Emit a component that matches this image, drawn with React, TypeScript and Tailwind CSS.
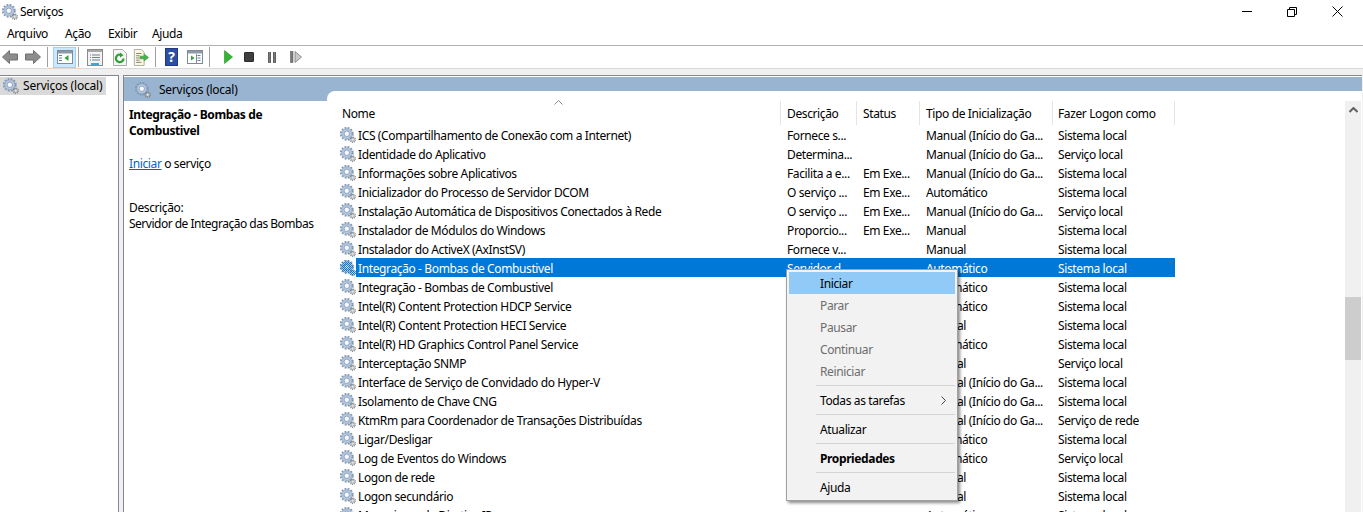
import React from "react"

const font = { fontFamily: '"Noto Sans", "Open Sans", sans-serif' }

const rows = [
  ["ICS (Compartilhamento de Conexão com a Internet)", "Fornece s...", "", "Manual (Início do Ga...", "Sistema local"],
  ["Identidade do Aplicativo", "Determina...", "", "Manual (Início do Ga...", "Serviço local"],
  ["Informações sobre Aplicativos", "Facilita a e...", "Em Exe...", "Manual (Início do Ga...", "Sistema local"],
  ["Inicializador do Processo de Servidor DCOM", "O serviço ...", "Em Exe...", "Automático", "Sistema local"],
  ["Instalação Automática de Dispositivos Conectados à Rede", "O serviço ...", "Em Exe...", "Manual (Início do Ga...", "Serviço local"],
  ["Instalador de Módulos do Windows", "Proporcio...", "Em Exe...", "Manual", "Sistema local"],
  ["Instalador do ActiveX (AxInstSV)", "Fornece v...", "", "Manual", "Sistema local"],
  ["Integração - Bombas de Combustivel", "Servidor d...", "", "Automático", "Sistema local"],
  ["Integração - Bombas de Combustivel", "", "", "Automático", "Sistema local"],
  ["Intel(R) Content Protection HDCP Service", "", "", "Automático", "Sistema local"],
  ["Intel(R) Content Protection HECI Service", "", "", "Manual", "Sistema local"],
  ["Intel(R) HD Graphics Control Panel Service", "", "", "Automático", "Sistema local"],
  ["Interceptação SNMP", "", "", "Manual", "Serviço local"],
  ["Interface de Serviço de Convidado do Hyper-V", "", "", "Manual (Início do Ga...", "Sistema local"],
  ["Isolamento de Chave CNG", "", "", "Manual (Início do Ga...", "Sistema local"],
  ["KtmRm para Coordenador de Transações Distribuídas", "", "", "Manual (Início do Ga...", "Serviço de rede"],
  ["Ligar/Desligar", "", "", "Automático", "Sistema local"],
  ["Log de Eventos do Windows", "", "", "Automático", "Serviço local"],
  ["Logon de rede", "", "", "Manual", "Sistema local"],
  ["Logon secundário", "", "", "Manual", "Sistema local"],
  ["Mecanismo de Diretiva IPsec", "", "", "Automático", "Sistema local"],
]

function Gear({ selected = false }: { selected?: boolean }) {
  return (
    <svg width="16" height="16" viewBox="0 0 16 16" className="shrink-0">
      <defs>
        <pattern id="dither" width="2" height="2" patternUnits="userSpaceOnUse">
          <rect width="1" height="1" fill="#0078d7" />
          <rect x="1" y="1" width="1" height="1" fill="#0078d7" />
        </pattern>
      </defs>
      <circle cx="6.8" cy="6.8" r="6" fill="none" stroke="#8298b4" strokeWidth="1.8" strokeDasharray="1.9 1.25" />
      <circle cx="6.8" cy="6.8" r="5" fill="#b4c8e0" stroke="#7f95b2" strokeWidth="0.6" />
      <circle cx="6.8" cy="6.8" r="2.7" fill="#f6f9fd" stroke="#7f95b2" strokeWidth="0.8" />
      <circle cx="12.7" cy="12.7" r="2.6" fill="none" stroke="#74777b" strokeWidth="1.2" strokeDasharray="1 0.8" />
      <circle cx="12.7" cy="12.7" r="1.7" fill="#dfe1e4" stroke="#85888c" strokeWidth="0.6" />
      {selected && (
        <>
          <circle cx="6.8" cy="6.8" r="6" fill="none" stroke="url(#dither)" strokeWidth="1.8" strokeDasharray="1.9 1.25" />
          <circle cx="6.8" cy="6.8" r="5" fill="url(#dither)" />
          <circle cx="12.7" cy="12.7" r="2.6" fill="url(#dither)" stroke="url(#dither)" strokeWidth="1.2" strokeDasharray="1 0.8" />
        </>
      )}
    </svg>
  )
}

function Sep() {
  return <div className="w-px h-[20px] bg-[#a0a0a0]" />
}

function Arrow({ flip = false }: { flip?: boolean }) {
  return (
    <svg width="16" height="14" viewBox="0 0 16 14" className={flip ? "-scale-x-100" : ""}>
      <path d="M0.5 7 L7.5 0.5 V4 H15.5 V10 H7.5 V13.5 Z" fill="#8d8d8d" stroke="#6f6f6f" strokeWidth="1" />
    </svg>
  )
}

function Toolbar() {
  return (
    <div className="h-[23px] flex items-center bg-white border-b border-[#d9d9d9] pl-[2px]">
      <Arrow />
      <div className="w-[7px]" />
      <Arrow flip />
      <div className="w-[6px]" />
      <Sep />
      <div className="w-[5px]" />
      <div className="w-[23px] h-[21px] bg-[#cce8ff] border border-[#99d1ff] flex items-center justify-center">
        <svg width="16" height="14" viewBox="0 0 16 14">
          <rect x="0.5" y="0.5" width="15" height="13" fill="#fff" stroke="#7f8b99" />
          <rect x="1" y="1" width="14" height="2.5" fill="#8d99a8" />
          <path d="M2 5.5h3M2 8h3M2 10.5h3" stroke="#5f7fa8" strokeWidth="1" />
          <path d="M11.5 5 L7.5 8 L11.5 11 Z" fill="#2fa33a" />
        </svg>
      </div>
      <div className="w-[2px]" />
      <Sep />
      <div className="w-[8px]" />
      <svg width="16" height="17" viewBox="0 0 16 17">
        <rect x="0.5" y="0.5" width="15" height="16" fill="#f3f3f3" stroke="#8a8a8a" />
        <rect x="1" y="1" width="14" height="2" fill="#a8a8a8" />
        <path d="M3 6h10M3 8.5h10M3 11h10" stroke="#6f7f92" strokeWidth="1" strokeDasharray="1 1 8 0" />
        <rect x="4" y="14" width="8" height="2" fill="#34a8e8" />
      </svg>
      <div className="w-[9px]" />
      <svg width="16" height="17" viewBox="0 0 16 17">
        <path d="M1.5 0.5 H10.5 L14.5 4.5 V16.5 H1.5 Z" fill="#f6f6f6" stroke="#a8a8a8" />
        <path d="M11.5 9.5 A3.8 3.8 0 1 1 9.5 6" fill="none" stroke="#2f9e35" strokeWidth="2.2" />
        <path d="M8 3.5 L11.5 6.2 L8 8.5 Z" fill="#2f9e35" />
      </svg>
      <div className="w-[5px]" />
      <svg width="16" height="17" viewBox="0 0 18 19">
        <path d="M1.5 0.5 H9.5 L12.5 3.5 V18.5 H1.5 Z" fill="#fbf7dc" stroke="#a8a8a0" />
        <path d="M3.5 5h6M3.5 7.5h4M3.5 10h4M3.5 12.5h4M3.5 15h6" stroke="#777" strokeWidth="1" />
        <path d="M8 8 H12.5 V5.5 L17.5 9.5 L12.5 13.5 V11 H8 Z" fill="#45b34a" stroke="#2f8f35" strokeWidth="0.6" />
      </svg>
      <div className="w-[6px]" />
      <Sep />
      <div className="w-[9px]" />
      <div className="w-[13px] h-[18px] bg-[#2c4ea3] border border-[#1f3a80] text-white text-[14px] font-bold flex items-center justify-center leading-none">?</div>
      <div className="w-[9px]" />
      <svg width="16" height="14" viewBox="0 0 16 14">
        <rect x="0.5" y="0.5" width="15" height="13" fill="#fff" stroke="#7f8b99" />
        <rect x="1" y="1" width="14" height="2.5" fill="#8d99a8" />
        <path d="M4 5.5 L7.5 8 L4 10.5 Z" fill="#2fa33a" />
        <path d="M10.5 5.5h3M10.5 8h3M10.5 10.5h3" stroke="#5f7fa8" strokeWidth="1" />
        <path d="M9.5 4v9" stroke="#7f8b99" />
      </svg>
      <div className="w-[6px]" />
      <Sep />
      <div className="w-[14px]" />
      <svg width="9" height="14" viewBox="0 0 9 14"><path d="M0.5 0.5 L8.5 7 L0.5 13.5 Z" fill="#35b535" stroke="#1f8f1f" strokeWidth="0.6" /></svg>
      <div className="w-[11px]" />
      <div className="w-[10px] h-[10px] bg-[#3f3f3f] border border-[#2b2b2b] rounded-[1px]" />
      <div className="w-[14px]" />
      <div className="flex gap-[2px]">
        <div className="w-[3px] h-[11px] bg-[#7a7a7a] border-x border-[#5f5f5f]" />
        <div className="w-[3px] h-[11px] bg-[#7a7a7a] border-x border-[#5f5f5f]" />
      </div>
      <div className="w-[14px]" />
      <svg width="12" height="12" viewBox="0 0 12 12">
        <rect x="0.5" y="0.5" width="2.5" height="11" fill="#7a7a7a" stroke="#5f5f5f" strokeWidth="0.6" />
        <path d="M5 0.5 L11.5 6 L5 11.5 Z" fill="#c9c9c9" stroke="#777" strokeWidth="0.8" />
      </svg>
    </div>
  )
}

function ContextMenu() {
  const disabled = ["Parar", "Pausar", "Continuar", "Reiniciar"]
  const line = <div className="h-[7px] flex items-center pl-[27px]"><div className="h-px w-full bg-[#d4d4d4]" /></div>
  const item = "h-[22px] flex items-center pl-[31px] pt-px"
  return (
    <div className="absolute left-[786px] top-[269px] w-[172px] bg-[#f2f2f2] border border-[#a0a0a0] p-[2px] shadow-[2px_2px_3px_rgba(0,0,0,0.45)]">
      <div className={`${item} bg-[#91c9f7] text-black`}>Iniciar</div>
      {disabled.map((d) => (
        <div key={d} className={`${item} text-[#6d6d6d]`}>{d}</div>
      ))}
      {line}
      <div className={`${item} justify-between pr-[9px]`}>
        <span>Todas as tarefas</span>
        <svg width="5" height="9" viewBox="0 0 5 9"><path d="M0.5 0.5 L4.5 4.5 L0.5 8.5" fill="none" stroke="#444" /></svg>
      </div>
      {line}
      <div className={item}>Atualizar</div>
      {line}
      <div className={`${item} font-bold`}>Propriedades</div>
      {line}
      <div className={item}>Ajuda</div>
    </div>
  )
}

function Row({ row, selected }: { row: string[]; selected: boolean }) {
  const text = selected ? "text-white" : "text-black"
  return (
    <div className="flex h-[19px] items-center whitespace-nowrap shrink-0">
      <div className="w-[13px]" />
      <Gear selected={selected} />
      <div className={`flex items-center h-full pl-[2px] pt-[2px] w-[819px] ${selected ? "bg-[#0078d7]" : ""} ${text}`}>
        <div className="w-[429px] overflow-hidden">{row[0]}</div>
        <div className="w-[76px] overflow-hidden">{row[1]}</div>
        <div className="w-[63px] overflow-hidden">{row[2]}</div>
        <div className="w-[132px] overflow-hidden">{row[3]}</div>
        <div>{row[4]}</div>
      </div>
    </div>
  )
}

export default function App() {
  const headers: [string, string][] = [
    ["Descrição", "w-[76px] pl-[6px]"],
    ["Status", "w-[63px] pl-[6px]"],
    ["Tipo de Inicialização", "w-[133px] pl-[6px]"],
    ["Fazer Logon como", "w-[122px] pl-[5px]"],
  ]
  return (
    <div className="relative w-[1363px] h-[512px] overflow-hidden bg-white text-[12px] leading-[16px] tracking-[-0.38px] text-black flex flex-col" style={font}>
      {/* title bar */}
      <div className="h-[23px] flex items-center pl-[2px] shrink-0">
        <Gear />
        <span className="ml-[2px]">Serviços</span>
        <div className="ml-auto flex items-center">
          <div className="w-[10px] h-px bg-black mr-[35px]" />
          <svg width="10" height="10" viewBox="0 0 10 10" className="mr-[35px]">
            <path d="M0.5 2.5h7v7h-7zM2.5 2.5v-2h7v7h-2" fill="none" stroke="#000" />
          </svg>
          <svg width="11" height="11" viewBox="0 0 11 11" className="mr-[20px]">
            <path d="M0.5 0.5 L10.5 10.5 M10.5 0.5 L0.5 10.5" stroke="#000" />
          </svg>
        </div>
      </div>
      {/* menu */}
      <div className="h-[23px] flex items-center border-b border-[#b0b0b0] shrink-0">
        <span className="ml-[7px] w-[58px]">Arquivo</span>
        <span className="w-[43px]">Ação</span>
        <span className="w-[44px]">Exibir</span>
        <span>Ajuda</span>
      </div>
      <Toolbar />
      <div className="flex-1 min-h-0 bg-[#f0f0f0] pt-[6px] flex gap-[4px]">
        {/* tree */}
        <div className="w-[119px] bg-white border-t border-r border-[#828790] pt-px">
          <div className="h-[18px] w-[106px] bg-[#d9d9d9] flex items-center pl-[3px] gap-[4px] whitespace-nowrap tracking-[-0.2px]">
            <Gear />
            <span>Serviços (local)</span>
          </div>
        </div>
        {/* main pane */}
        <div className="flex-1 bg-white border-t border-l border-[#828790] mr-px flex flex-col min-w-0">
          <div className="h-[25px] bg-[#99b4d1] shrink-0 flex items-center pl-[11px] gap-[8px] pt-[2px] border-t border-white tracking-[-0.25px]">
            <Gear />
            <span>Serviços (local)</span>
          </div>
          <div className="flex flex-1 min-h-0">
            <div className="w-[203px] shrink-0 pl-[5px] pt-[6px] pr-[4px]">
              <div className="font-bold">Integração - Bombas de Combustivel</div>
              <div className="mt-[17px]"><span className="text-[#0066cc] underline">Iniciar</span> o serviço</div>
              <div className="mt-[28px]">Descrição:</div>
              <div className="whitespace-nowrap tracking-[-0.5px]">Servidor de Integração das Bombas</div>
            </div>
            <div className="flex-1 min-w-0 -mt-[10px] bg-white rounded-tl-[8px] flex">
              <div className="flex-1 min-w-0 flex flex-col overflow-hidden">
                <div className="h-[34px] shrink-0 relative flex items-end whitespace-nowrap">
                  <svg width="9" height="5" viewBox="0 0 9 5" className="absolute left-[227px] top-[9px]">
                    <path d="M0.5 4.5 L4.5 0.5 L8.5 4.5" fill="none" stroke="#8a8a8a" />
                  </svg>
                  <div className="w-[454px] pl-[15px] h-[24px] pb-[3px] flex items-end border-r border-[#e5e5e5]">Nome</div>
                  {headers.map(([label, cls]) => (
                    <div key={label} className={`${cls} h-[24px] pb-[3px] flex items-end border-r border-[#e5e5e5]`}>{label}</div>
                  ))}
                </div>
                {rows.map((r, i) => (
                  <Row key={i} row={r} selected={i === 7} />
                ))}
              </div>
              <div className="w-[16px] shrink-0 mt-[10px] mr-px bg-[#f0f0f0] flex flex-col">
                <div className="h-[17px] flex items-center justify-center">
                  <svg width="9" height="6" viewBox="0 0 9 6"><path d="M0.5 5 L4.5 1 L8.5 5" fill="none" stroke="#606060" strokeWidth="2" /></svg>
                </div>
                <div className="mt-[179px] h-[63px] bg-[#cdcdcd]" />
              </div>
            </div>
          </div>
        </div>
      </div>
      <ContextMenu />
    </div>
  )
}
